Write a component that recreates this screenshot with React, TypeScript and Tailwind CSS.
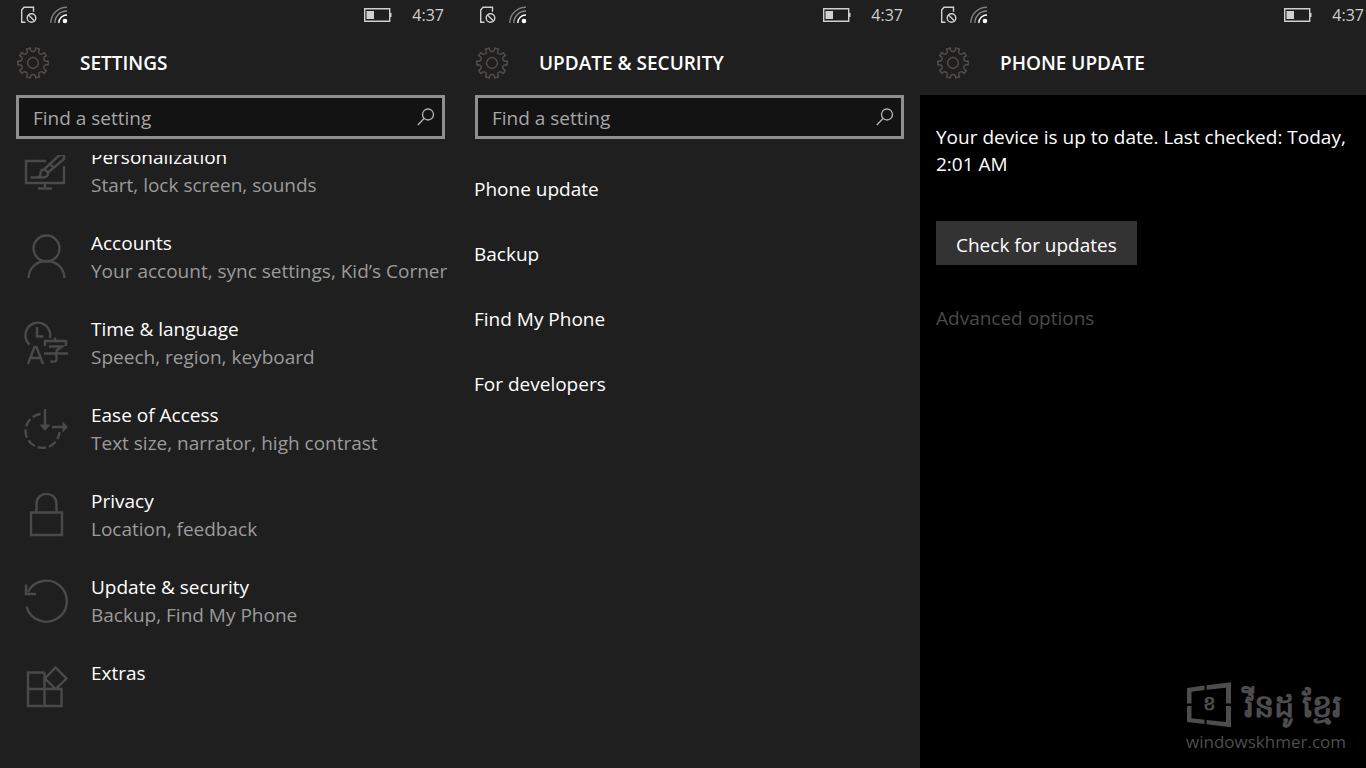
import type { ReactNode } from "react";

interface SettingItem {
    title: string;
    detail?: string;
    icon: ReactNode;
}

// 10 teeth, drawn around the centre of a 32x32 box
const gearPath = (() => {
    const points: string[] = [];
    const corners = [[-13, 11.6], [-8, 12.8], [-7.5, 15.3], [7.5, 15.3], [8, 12.8], [13, 11.6]];
    for (let i = 0; i < 10; i++) {
        corners.forEach(([angle, radius]) => {
            const a = ((i * 36 + angle) * Math.PI) / 180;
            points.push(`${(16 + radius * Math.cos(a)).toFixed(2)} ${(16 + radius * Math.sin(a)).toFixed(2)}`);
        });
    }
    return `M${points.join("L")}Z`;
})();

function GearIcon() {
    return (
        <svg viewBox="0 0 32 32" className="size-8 shrink-0" fill="none" stroke="#504c49" strokeWidth="1.5" aria-hidden="true">
            <path d={gearPath} strokeLinejoin="round" />
            <circle cx="16" cy="16" r="5.4" />
        </svg>
    );
}

function LineIcon({ children }: { children: ReactNode }) {
    return (
        <svg viewBox="0 0 48 48" className="size-12 shrink-0" fill="none" stroke="#4c4a48" strokeWidth="2.4" aria-hidden="true">
            {children}
        </svg>
    );
}

const items: SettingItem[] = [
    {
        title: "Personalization",
        detail: "Start, lock screen, sounds",
        icon: (
            <LineIcon>
                <path d="M24 14H4v22h38V19" />
                <path d="M23 36v5M16 41.500h14" />
                <path d="M8.500 30.500h12c4 0 6-2 5.500-5l-3.500-3c-3 0-4 2-4 4s-1 4-3.500 4" />
                <path d="M22.500 22 37.500 8h4.500v4L26 25.500M28 17l4 4" />
            </LineIcon>
        ),
    },
    {
        title: "Accounts",
        detail: "Your account, sync settings, Kid’s Corner",
        icon: (
            <LineIcon>
                <circle cx="24.5" cy="15.5" r="13" />
                <path d="M6.500 45c.5-10 8-17 18-17s17.500 7 18 17" />
            </LineIcon>
        ),
    },
    {
        title: "Time & language",
        detail: "Speech, region, keyboard",
        icon: (
            <LineIcon>
                <path d="M7.500 25.500A12.500 12.500 0 1 1 28 19" />
                <path d="M15 8v9.500h6.500" />
                <path d="M6 45l6.500-17h2l6.500 17M8.500 39h10" />
                <path d="M33 18.500V22M23 27v-5h21v5M27 27.500h13l-6 4.500M22 34.500h24M34.500 32v8.500c0 2-1.500 2.500-6 2" />
            </LineIcon>
        ),
    },
    {
        title: "Ease of Access",
        detail: "Text size, narrator, high contrast",
        icon: (
            <LineIcon>
                <path d="M18.500 9A17 17 0 1 0 37.500 27" strokeDasharray="8.5 3" />
                <path d="M23 4v17M30 22h12" />
                <path d="M17.500 19.500h11L23 26zM40.500 16.500v11L46 22z" fill="#4c4a48" stroke="none" />
            </LineIcon>
        ),
    },
    {
        title: "Privacy",
        detail: "Location, feedback",
        icon: (
            <LineIcon>
                <path d="M9 21.500h31v22.500H9zM14.500 21.500V13C14.500 -.5 34.500 -.5 34.500 13v8.500" />
            </LineIcon>
        ),
    },
    {
        title: "Update & security",
        detail: "Backup, Find My Phone",
        icon: (
            <LineIcon>
                <path d="M4.500 29.500A20.500 20.500 0 1 0 6 15M4 7.500V17h10" />
            </LineIcon>
        ),
    },
    {
        title: "Extras",
        icon: (
            <LineIcon>
                <path d="M22.500 9.500H6V43h33.500V26H6M22.500 9.500V43M23 15.500 33.500 4.500 44.500 15.500 33.500 26z" />
            </LineIcon>
        ),
    },
];

const updateLinks = ["Phone update", "Backup", "Find My Phone", "For developers"];

function StatusBar() {
    return (
        <div className="flex h-[30px] items-center text-[#d0d0d0]">
            <svg viewBox="0 0 18 18" className="size-[18px]" fill="none" stroke="currentColor" strokeWidth="1.4" aria-hidden="true">
                <path d="M5.500 16.300H1.700V4L4 1.200h9.500v4.500" />
                <circle cx="11.5" cy="12" r="4.3" />
                <path d="m8.500 9 6 6" />
            </svg>
            <svg viewBox="0 0 18 18" className="ml-3 size-[18px]" fill="none" stroke="currentColor" strokeWidth="1.4" aria-hidden="true">
                <path d="M.8 17A16 16 0 0 1 17 1.200" opacity=".55" />
                <path d="M4.800 17A12 12 0 0 1 17 5" opacity=".6" />
                <path d="M8.800 17A8 8 0 0 1 17 9" stroke="white" />
                <circle cx="15" cy="15" r="2.3" fill="white" stroke="none" />
            </svg>
            <svg viewBox="0 0 29 14" className="ml-auto h-[14px] w-[29px]" fill="none" aria-hidden="true">
                <path d="M1.700.700h25v12.600h-25z" stroke="currentColor" strokeWidth="1.4" />
                <path d="M3.500 3h7.500v8H3.500zM27 5h1.500v4H27z" fill="currentColor" />
            </svg>
            <span className="ml-5 text-base">4:37</span>
        </div>
    );
}

function PanelHeader({ title }: { title: string }) {
    return (
        <header className="flex h-[65px] items-center gap-[31px] pt-px">
            <GearIcon />
            <h1 className="text-[19px] font-semibold whitespace-nowrap">{title}</h1>
        </header>
    );
}

function SearchBox({ id }: { id: string }) {
    return (
        <div className="flex h-11 items-center border-3 border-[#8f8f8f] bg-[#131313] pr-[7px] pl-[14px]">
            <input
                id={id}
                type="text"
                aria-label="Find a setting"
                placeholder="Find a setting"
                className="min-w-0 flex-1 bg-transparent pt-px text-[19px] outline-none placeholder:text-[#a6a6a6]"
            />
            <svg viewBox="0 0 18 18" className="size-[18px]" fill="none" stroke="#b5b5b5" strokeWidth="1.3" aria-hidden="true">
                <circle cx="11" cy="6.5" r="5.5" />
                <path d="M7 10.500.8 17" />
            </svg>
        </div>
    );
}

function Watermark() {
    return (
        <footer className="mt-auto flex flex-col items-end pr-5 pb-3 text-[#4d4d4d]">
            <div className="flex items-center gap-3 pr-1">
                <svg viewBox="0 0 46 46" className="size-[46px]" fill="currentColor" aria-hidden="true">
                    <path d="M1 6 18.500 3.500v4.500L5.500 9.800v11.700H1zM20.500 3.200 45 .2v21.300h-5V5.700l-19.500 2zM1 24h4.500v12.300l13 1.500v4.200L1 40zM40 24h5v21.300l-24.500-3v-4.400l19.500 2.200z" />
                    <text x="23" y="28" fontSize="20" fontWeight="700" textAnchor="middle">ខ</text>
                </svg>
                <span className="text-[32px] leading-[46px] font-bold whitespace-nowrap">វីនដូ ខ្មែរ</span>
            </div>
            <a href="#home" className="text-[17px] leading-7">windowskhmer.com</a>
        </footer>
    );
}

function App() {
    return (
        <main className="grid min-h-screen grid-cols-[459fr_461fr_446fr] bg-[#1f1f1f] font-['Open_Sans','Noto_Sans',sans-serif] text-[19px] leading-7 text-white">
            <section className="flex min-w-0 flex-col">
                <div className="pr-[15px] pl-5">
                    <StatusBar />
                </div>
                <div className="pr-[14px] pl-[17px]">
                    <PanelHeader title="SETTINGS" />
                </div>
                <div className="pr-[14px] pl-4">
                    <SearchBox id="find-setting" />
                </div>
                <div className="mt-4 overflow-hidden pl-[22px]">
                    <ul className="-mt-3 flex flex-col gap-[30px]">
                        {items.map((item) => (
                            <li key={item.title}>
                                <a href="#setting" className="flex h-14 gap-[21px] whitespace-nowrap">
                                    <span className="pt-1">{item.icon}</span>
                                    <span className="flex flex-col">
                                        <span>{item.title}</span>
                                        <span className="text-[#9b9b9b]">{item.detail}</span>
                                    </span>
                                </a>
                            </li>
                        ))}
                    </ul>
                </div>
            </section>

            <section className="flex min-w-0 flex-col">
                <div className="pr-[17px] pl-5">
                    <StatusBar />
                </div>
                <div className="px-[17px]">
                    <PanelHeader title="UPDATE & SECURITY" />
                </div>
                <div className="px-4">
                    <SearchBox id="find-update-setting" />
                </div>
                <ul className="mt-9 flex flex-col gap-[37px] pl-[15px]">
                    {updateLinks.map((link) => (
                        <li key={link}>
                            <a href="#update" className="block">{link}</a>
                        </li>
                    ))}
                </ul>
            </section>

            <section className="flex min-w-0 flex-col">
                <div className="pr-[2px] pl-5">
                    <StatusBar />
                </div>
                <div className="pl-[17px]">
                    <PanelHeader title="PHONE UPDATE" />
                </div>
                <div className="flex flex-1 flex-col bg-black pt-[29px]">
                    <div className="flex flex-col items-start pr-3 pl-4">
                        <p className="leading-[27px]">Your device is up to date. Last checked: Today, 2:01 AM</p>
                        <button type="button" className="mt-[43px] h-11 bg-[#333333] px-5 pt-[3px]">
                            Check for updates
                        </button>
                        <a href="#advanced" className="mt-[39px] text-[#4a4a4a]">Advanced options</a>
                    </div>
                    <Watermark />
                </div>
            </section>
        </main>
    );
}

export default App;
